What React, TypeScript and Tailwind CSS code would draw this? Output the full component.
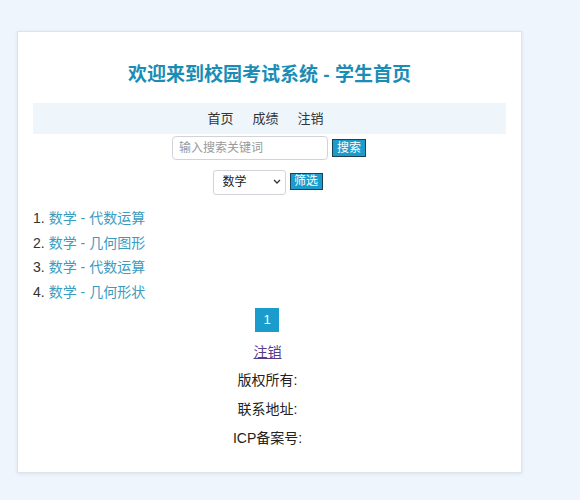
import React from "react";

const items = ["数学 - 代数运算", "数学 - 几何图形", "数学 - 代数运算", "数学 - 几何形状"];

export default function App() {
  return (
    <div
      className="w-[580px] h-[500px] bg-[#eef5fc] pt-[31px] pl-[17px] overflow-hidden"
      style={{ fontFamily: '"Liberation Sans", "Noto Sans CJK SC", sans-serif' }}
    >
      <div className="w-[505px] h-[442px] bg-white border border-[#dce3ea] shadow-[0_1px_4px_rgba(0,0,0,0.08)] px-[15px] pt-[29px]">
        <h2 className="text-center text-[19px] leading-[28px] font-bold text-[#1a8db5]">
          欢迎来到校园考试系统 - 学生首页
        </h2>
        <nav className="mt-[14px] h-[31px] bg-[#eef6fc] flex items-center justify-center gap-[19px] pr-[8px] text-[13px] text-[#333]">
          <span>首页</span>
          <span>成绩</span>
          <span>注销</span>
        </nav>
        <div className="mt-[2px] flex items-center justify-center gap-[4px] pr-[1px]">
          <input
            className="w-[156px] h-[24px] border border-[#d0d4d8] rounded-[4px] px-[6px] text-[12px] placeholder-[#999] outline-none"
            placeholder="输入搜索关键词"
          />
          <button className="w-[34px] h-[18px] bg-[#1a9ccc] border border-[#1f3f52] text-white text-[12px] leading-[16px] flex items-center justify-center">
            搜索
          </button>
        </div>
        <div className="mt-[9px] flex items-center justify-center gap-[4px] pr-[4px]">
          <div className="relative w-[73px] h-[25px]">
            <select className="appearance-none w-full h-full border border-[#d0d4d8] rounded-[3px] pl-[9px] text-[12px] text-[#222] bg-white outline-none">
              <option>数学</option>
            </select>
            <svg
              className="absolute right-[5px] top-[10px] pointer-events-none"
              width="8"
              height="5"
              viewBox="0 0 8 5"
              fill="none"
            >
              <path d="M1 1l3 3 3-3" stroke="#333" strokeWidth="1.3" />
            </svg>
          </div>
          <button className="w-[33px] h-[17px] bg-[#1a9ccc] border border-[#1f3f52] text-white text-[12px] leading-[15px] flex items-center justify-center">
            筛选
          </button>
        </div>
        <ol className="mt-[12px]">
          {items.map((t, i) => (
            <li key={i} className="h-[24.5px] leading-[24.5px] text-[14px] text-[#333] flex">
              <span>{i + 1}.</span>
              <span className="ml-[4px] text-[#3a9cbf]">{t}</span>
            </li>
          ))}
        </ol>
        <div className="mt-[4px] flex justify-center pr-[5px]">
          <span className="w-[24px] h-[24px] bg-[#1a9ccc] text-white text-[13px] flex items-center justify-center">1</span>
        </div>
        <div className="mt-[10px] text-center text-[14px] leading-[20px] pr-[4px]">
          <a className="text-[#553b8a] underline">注销</a>
        </div>
        <div className="text-center text-[14px] text-[#222] pr-[4px]">
          <p className="mt-[8px] leading-[20px]">版权所有:</p>
          <p className="mt-[9px] leading-[20px]">联系地址:</p>
          <p className="mt-[9px] leading-[20px]">ICP备案号:</p>
        </div>
      </div>
    </div>
  );
}
